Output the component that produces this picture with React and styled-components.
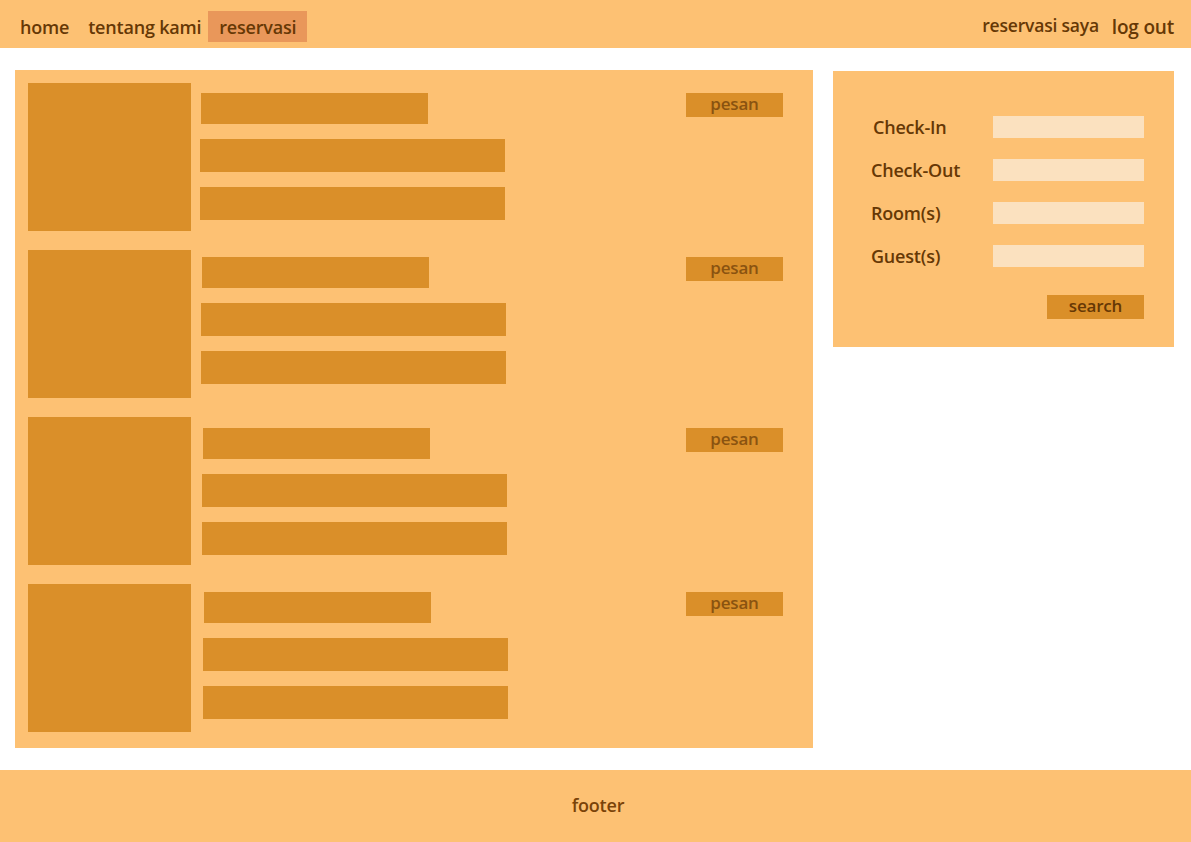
import React from "react";
import styled, { createGlobalStyle } from "styled-components";

const Global = createGlobalStyle`
  html, body { margin: 0; padding: 0; background: #fff; }
  body { font-family: "Open Sans", "Noto Sans", sans-serif; }
  * { box-sizing: border-box; }
`;

const LIGHT = "#fdc173";
const DARK = "#da8f29";
const TEXT = "#663805";

const Page = styled.div`
  width: 1191px;
  height: 842px;
  display: flex;
  flex-direction: column;
`;

const Nav = styled.nav`
  height: 48px;
  background: ${LIGHT};
  display: flex;
  align-items: flex-start;
  justify-content: space-between;
  padding: 11px 17px 0 8px;
`;

const NavGroup = styled.div`
  display: flex;
  align-items: center;
  gap: ${(p) => p.$gap || 0}px;
`;

const NavItem = styled.a`
  font-size: ${(p) => p.$size || 18}px;
  font-weight: 600;
  color: ${TEXT};
  text-decoration: none;
  height: 31px;
  display: flex;
  align-items: center;
  padding: 0 ${(p) => p.$pr ?? p.$pad ?? 12}px 0 ${(p) => p.$pad ?? 12}px;
  margin-top: ${(p) => p.$dy || 0}px;
  background: ${(p) => (p.$active ? "#e9975a" : "transparent")};
  letter-spacing: -0.2px;
  white-space: nowrap;
`;

const Main = styled.main`
  flex: 1;
  display: flex;
  align-items: flex-start;
  padding: 22px 17px 22px 15px;
  gap: 20px;
`;

const ListPanel = styled.section`
  width: 798px;
  height: 678px;
  background: ${LIGHT};
  padding: 13px 0 0 13px;
  display: flex;
  flex-direction: column;
  gap: 19px;
`;

const Card = styled.div`
  display: flex;
  height: 148px;
`;

const Thumb = styled.div`
  width: 163px;
  height: 148px;
  background: ${DARK};
  flex-shrink: 0;
`;

const Info = styled.div`
  display: flex;
  flex-direction: column;
  padding-top: ${(p) => 10 + p.$dy}px;
  margin-left: ${(p) => 9 + p.$dx}px;
  width: 306px;
`;

const Bar = styled.div`
  background: ${DARK};
  width: ${(p) => p.$w}px;
  height: ${(p) => p.$h}px;
  margin-left: ${(p) => p.$ml || 0}px;
  margin-top: ${(p) => p.$mt || 0}px;
`;

const PesanWrap = styled.div`
  margin-left: auto;
  margin-right: 30px;
  padding-top: ${(p) => 10 + p.$dy}px;
`;

const Button = styled.button`
  width: 97px;
  height: 24px;
  border: none;
  background: ${DARK};
  color: ${(p) => p.$color || TEXT};
  font-family: inherit;
  font-weight: 600;
  font-size: 17px;
  padding: 0 0 3px;
  line-height: 20px;
  display: flex;
  align-items: center;
  justify-content: center;
  letter-spacing: -0.2px;
`;

const Side = styled.aside`
  width: 341px;
  height: 276px;
  margin-top: 1px;
  background: ${LIGHT};
  padding: 45px 30px 0 38px;
  display: flex;
  flex-direction: column;
`;

const FormRow = styled.div`
  display: flex;
  align-items: center;
  justify-content: space-between;
  height: 22px;
  margin-bottom: 21px;
`;

const Label = styled.label`
  font-size: 18px;
  font-weight: 600;
  color: ${TEXT};
  margin-left: ${(p) => p.$ml || 0}px;
  letter-spacing: -0.2px;
`;

const Input = styled.div`
  width: 151px;
  height: 22px;
  background: #fbe1bf;
`;

const SearchRow = styled.div`
  display: flex;
  justify-content: flex-end;
  margin-top: 7px;
`;

const Footer = styled.footer`
  height: 72px;
  background: ${LIGHT};
  display: flex;
  align-items: center;
  justify-content: center;
  font-size: 18px;
  font-weight: 600;
  color: #7a4308;
  padding: 0 0 2px 5px;
  letter-spacing: -0.2px;
`;

const cards = [
  { dx: 0, dy: 0 },
  { dx: 1, dy: -3 },
  { dx: 2, dy: 1 },
  { dx: 3, dy: -2 },
];

const fields = [
  { label: "Check-In", ml: 2 },
  { label: "Check-Out", ml: 0 },
  { label: "Room(s)", ml: 0 },
  { label: "Guest(s)", ml: 0 },
];

export default function App() {
  return (
    <Page>
      <Global />
      <Nav>
        <NavGroup>
          <NavItem href="#" $pr={10}>home</NavItem>
          <NavItem href="#" $pad={9} $pr={7}>tentang kami</NavItem>
          <NavItem href="#" $active $pad={11}>reservasi</NavItem>
        </NavGroup>
        <NavGroup $gap={13}>
          <NavItem href="#" $pad={0} $size={17.5} $dy={-4}>reservasi saya</NavItem>
          <NavItem href="#" $pad={0} $size={19}>log out</NavItem>
        </NavGroup>
      </Nav>
      <Main>
        <ListPanel>
          {cards.map((c, i) => (
            <Card key={i}>
              <Thumb />
              <Info $dx={c.dx} $dy={c.dy}>
                <Bar $w={227} $h={31} $ml={1} />
                <Bar $w={305} $h={33} $mt={15} />
                <Bar $w={305} $h={33} $mt={15} />
              </Info>
              <PesanWrap $dy={c.dy}>
                <Button $color="#8a5310">pesan</Button>
              </PesanWrap>
            </Card>
          ))}
        </ListPanel>
        <Side>
          {fields.map((f) => (
            <FormRow key={f.label}>
              <Label $ml={f.ml}>{f.label}</Label>
              <Input />
            </FormRow>
          ))}
          <SearchRow>
            <Button>search</Button>
          </SearchRow>
        </Side>
      </Main>
      <Footer>footer</Footer>
    </Page>
  );
}
